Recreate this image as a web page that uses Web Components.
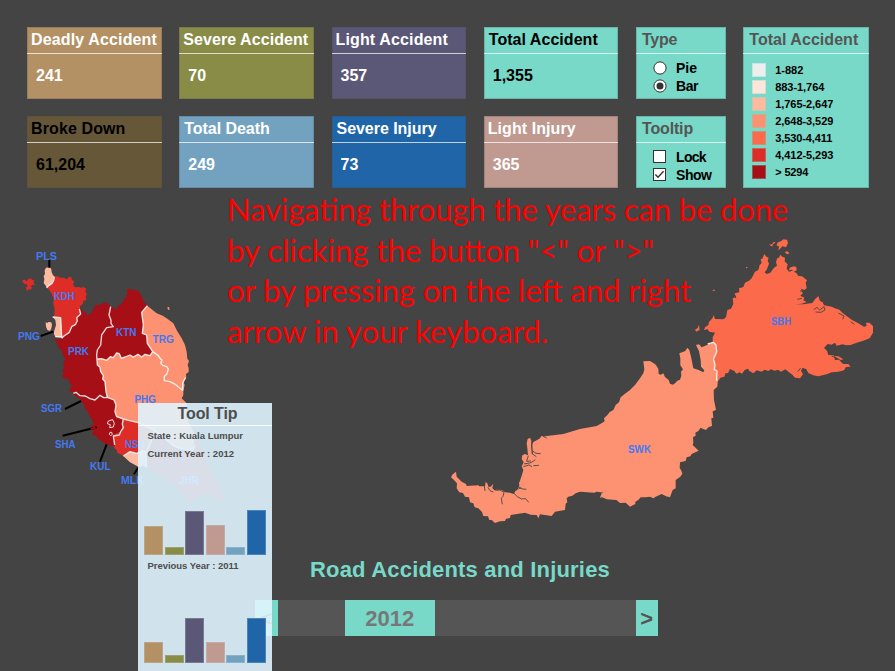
<!DOCTYPE html>
<html lang="en">
<head>
<meta charset="utf-8">
<title>Road Accidents and Injuries</title>
<style>
html,body{margin:0;width:895px;height:671px;overflow:hidden;background:#444}
body{font-family:"Liberation Sans",Arial,sans-serif;font-weight:bold}
</style>
</head>
<body>
<accident-dashboard></accident-dashboard>
<script>
const define = (name, html, setup) => customElements.define(name, class extends HTMLElement {
  connectedCallback() {
    if (this.shadowRoot) return;
    const t = document.createElement('template');
    t.innerHTML = typeof html === 'function' ? html(this) : html;
    this.attachShadow({mode: 'open'}).append(t.content.cloneNode(true));
    if (setup) setup(this);
  }
});

/* Text spaced so that it fills the width given by its "w" attribute. */
define('fit-text', `<style>:host{display:inline-block;white-space:nowrap}</style><span><slot></slot></span>`, el => {
  const w = parseFloat(el.getAttribute('w'));
  const natural = el.shadowRoot.querySelector('span').getBoundingClientRect().width;
  if (w && natural) el.style.letterSpacing = (w - natural) / el.textContent.length + 'px';
});

/* Titled coloured panel. */
define('info-panel', el => `<style>
  :host{display:flex;flex-direction:column;box-sizing:border-box;background:var(--bg);color:var(--fg,#fff);box-shadow:inset 0 0 0 1px rgba(70,70,70,.25)}
  header{box-sizing:border-box;height:27px;padding:4px 0 0 var(--pad,4px);font-size:16px;line-height:18px;border-bottom:1.5px solid rgba(255,255,255,.72);color:var(--title,inherit)}
  ::slotted(.value){padding:13px 0 0 9px;font-size:16px;line-height:18px}
</style><header><fit-text w="${el.getAttribute('w')}">${el.getAttribute('heading')}</fit-text></header><slot></slot>`);

define('choice-item', el => {
  const on = el.hasAttribute('checked');
  const icon = el.getAttribute('kind') === 'radio'
    ? `<circle cx="7" cy="7" r="6.1" fill="#fff" stroke="#333"/>${on ? '<circle cx="7" cy="7" r="3.5" fill="#333"/>' : ''}`
    : `<rect x=".5" y=".5" width="12" height="12" fill="#fff" stroke="#333"/>${on ? '<path d="M2.4 6.5 5 9.3 10.6 3.3" fill="none" stroke="#333" stroke-width="1.4"/>' : ''}`;
  return `<style>
  :host{display:flex;align-items:center;height:18px;padding-left:17px;color:#000;font-size:14px;line-height:18px}
  svg{width:14px;height:14px;margin-right:9px;flex:none}</style>
  <svg viewBox="0 0 14 14">${icon}</svg><fit-text w="${el.getAttribute('w')}">${el.textContent}</fit-text>`;
});

define('map-legend', `<style>
  :host{display:flex;flex-direction:column;gap:3px;padding:9px 0 0 9px;color:#000;font-size:11px;line-height:14px}
  div{display:flex;height:14px}i{width:14px;margin-right:9px;box-shadow:inset 0 0 0 1px rgba(120,217,200,.35)}
</style>` + [['#eee','1-882',28],['#fee5d9','883-1,764',49],['#fcbba1','1,765-2,647',58],['#fc9272','2,648-3,529',58],['#fb6a4a','3,530-4,411',57],['#de2d26','4,412-5,293',58],['#a50f15','&gt; 5294',33]]
  .map(([c,t,w]) => `<div><i style="background:${c}"></i><fit-text w="${w}">${t}</fit-text></div>`).join(''));

/* Choropleth map; both coasts are drawn on a grid three times finer than the page. */
const label = (t,x,y,w) => `<text x="${x}" y="${y}" textLength="${w}" lengthAdjust="spacingAndGlyphs">${t}</text>`;
define('state-map', `<style>
  :host{display:block;height:360px}svg{display:block}
  .lbl{font:bold 11px "Liberation Sans",Arial,sans-serif;fill:#4479f2}
  .edge{fill:none;stroke:#fff;stroke-opacity:.85;stroke-width:4;stroke-linejoin:round}
  .cut{fill:none;stroke:#444;stroke-width:2.6;stroke-linejoin:round}
  .lead{stroke:#000;stroke-width:6}
  .note{font:400 30px Lato,sans-serif;fill:#f00}
</style>
<svg width="895" height="360" viewBox="0 188 895 360">
<g transform="translate(10 235) scale(.33333)">
  <path fill="#fcbba1" d="M108 98 120 97 124 103 125 112 129 120 133 125 131 136 126 145 116 152 110 158 106 150 101 145 103 132 101 124 105 117 104 106ZM107 262 112 264 115 261 124 262 126 270 124 280 120 288 112 285 108 275Z"/>
  <path fill="#de2d26" d="M38 135 44 134 50 139 55 132 63 130 67 136 72 134 71 143 76 150 68 149 62 153 66 157 63 164 57 162 54 167 50 164 47 158 53 154 50 146 44 147 38 142ZM133 125 142 123 150 128 160 128 172 133 175 126 184 127 186 134 193 140 189 148 194 157 208 156 216 160 218 155 228 160 226 170 231 178 227 184 229 194 220 198 219 207 210 213 210 220 212 237 200 248 202 257 197 268 185 275 178 292 162 303 155 312 152 248 132 246 134 222 130 206 131 190 124 175 118 165 110 158 126 145Z"/>
  <path fill="#fcbba1" d="M128 246 152 248 155 306 136 305 132 298 132 290 138 270 136 255Z"/>
  <path fill="#a50f15" d="M212 220 218 224 220 232 227 232 231 241 240 238 247 231 248 222 255 216 257 209 270 210 280 204 290 202 302 215 299 222 297 240 303 256 303 266 310 275 290 278 282 290 275 300 274 316 272 330 262 345 260 360 262 390 270 397 272 410 280 422 278 432 285 440 288 470 292 487 270 482 262 496 250 495 240 488 230 489 218 480 205 480 198 472 186 472 176 468 182 458 186 450 178 444 178 435 166 430 161 428 156 424 157 418 162 415 157 405 162 400 160 385 165 376 163 366 157 360 158 350 146 338 140 322 132 312 155 312 162 303 178 292 185 275 197 268 202 257 200 248 212 237Z"/>
  <path fill="#a50f15" d="M302 215 310 216 313 222 320 221 326 212 333 207 340 199 345 188 350 184 352 173 350 166 356 160 363 166 372 162 380 168 388 170 395 185 402 200 412 212 395 232 400 270 397 295 410 300 412 325 428 350 420 362 405 358 395 366 384 358 370 366 360 360 345 366 334 370 328 356 320 354 310 368 301 365 290 376 275 371 262 372 260 360 262 345 272 330 274 316 275 300 290 278 310 275 303 266 303 256 297 240Z"/>
  <path fill="#fc9272" d="M412 212 425 223 440 235 458 242 470 250 490 265 501 287 515 310 525 330 530 350 532 371 537 378 533 390 536 399 536 411 528 417 529 429 520 440 524 450 520 467 520 480 515 490 530 505 530 530 535 560 555 600 560 625 555 645 530 640 510 640 490 632 470 615 450 602 432 585 408 575 385 563 360 554 340 552 320 545 315 530 318 510 312 495 292 487 288 470 285 440 278 432 280 422 272 410 270 397 262 390 262 372 275 371 290 376 301 365 310 368 320 354 328 356 334 370 345 366 360 360 370 366 384 358 395 366 405 358 420 362 428 350 412 325 410 300 397 295 400 270 395 232ZM472 217 477 216 479 224 474 224Z"/>
  <path fill="#a50f15" d="M186 472 205 480 230 489 250 495 262 496 270 482 292 487 312 495 318 510 315 530 320 545 340 552 335 590 318 600 310 610 314 630 305 635 298 630 287 628 278 620 264 612 258 601 250 602 248 595 252 588 245 584 242 575 250 570 248 557 240 545 233 530 225 521 222 508 213 500 208 490 198 486Z"/>
  <path fill="#de2d26" d="M340 552 385 563 432 585 425 615 410 650 380 652 360 650 340 663 329 656 322 655 321 646 312 638 314 630 310 600 335 588Z"/>
  <path fill="#fcbba1" d="M340 663 360 650 380 655 396 648 410 650 413 700 400 692 385 695 360 682Z"/>
  <path fill="#a50f15" d="M432 585 470 615 490 632 510 640 548 645 555 600 575 640 590 660 593 690 620 740 642 790 635 800 600 780 575 778 560 785 535 805 525 780 480 740 440 715 413 700 410 650 425 615Z"/>
  <g class="edge">
    <path d="M133 125 131 136 126 145 116 152 110 158M128 246 152 248 155 306 136 305M155 310 162 303 178 292 185 275 197 268 202 257 200 248 212 237 208 222M302 215 297 240 303 256 303 266 310 275 290 278 275 300 272 330 262 345 260 360 262 390 270 397 272 410 280 422 278 432 285 440 288 470 292 487"/>
    <path d="M412 212 395 232 400 270 397 295 410 300 412 325 428 350 420 362 405 358 395 366 384 358 370 366 360 360 345 366 334 370 328 356 320 354 310 368 301 365 290 376 275 371 262 372M428 350 445 362 450 370 456 376 452 384 458 391 470 395 475 402 470 418 463 424 463 437 480 440 497 449 518 466 518 445 526 428"/>
    <path d="M190 475 198 472 210 482 226 483 240 491 255 495 270 481 281 488 292 487 312 495 318 510 315 530 320 545 340 552 385 563 432 585 470 615 490 632 510 640 548 645 555 630M340 552 337 567 340 578 332 590 328 600 310 603 314 630M432 585 425 615 410 650 396 648 380 655 360 650 340 663"/>
    <path d="M295 558 308 554 313 565 310 576 299 578 301 569 292 566ZM300 592h5l2 6-5 4-4-4Z" stroke-width="3"/>
  </g>
  <path class="lead" d="M118 74V98M92 303 130 290M165 522 213 498M158 602 260 577M270 680 290 628M372 718 384 698"/>
  <path d="M242 582 254 578 256 590 248 598" fill="none" stroke="#a50f15" stroke-width="5"/>
</g>
<g transform="translate(440 330) scale(.33333)">
  <path fill="#fc9272" d="M48 425 50 440 65 455 78 462 80 468 115 466 118 469 135 469 137 456 142 460 145 470 152 470 160 461 157 474 163 481 170 479 185 480 195 487 209 488 222 492 226 483 232 480 238 468 237 460 241 449 246 434 250 420 245 409 251 397 245 386 247 376 255 372 264 376 262 355 260 340 263 327 270 323 274 333 273 347 275 370 279 373 277 345 280 336 290 331 300 325 304 318 315 319 370 312 420 297 470 288 486 279 494 274 492 265 503 254 509 246 520 240 527 225 537 217 542 202 553 193 570 180 585 165 600 145 610 130 613 118 610 94 630 93 640 99 648 105 655 117 656 132 663 134 670 130 675 141 686 150 690 161 699 164 706 159 712 152 720 149 724 137 723 125 729 118 721 106 721 85 718 70 736 63 742 53 748 60 753 80 760 115 776 120 790 127 793 121 783 110 782 90 777 63 768 45 777 43 785 52 803 44 820 37 828 40 831 62 822 85 824 100 830 120 834 150 832 170 821 180 822 210 828 240 818 244 820 263 814 265 816 288 805 292 798 300 788 296 782 293 775 303 766 308 767 317 759 322 760 339 758 345 776 362 755 372 751 379 740 382 737 393 720 397 719 413 724 422 727 431 721 440 707 450 707 475 698 480 690 502 678 499 665 492 647 500 640 505 630 500 617 502 602 502 595 510 586 515 586 522 570 530 557 518 540 519 529 510 500 508 487 502 480 503 485 490 492 488 470 485 463 488 420 485 407 490 397 497 385 500 380 505 382 517 377 521 375 540 345 545 335 558 300 553 295 565 290 555 272 554 255 548 212 555 210 564 198 566 195 573 180 574 165 579 155 570 148 570 144 559 130 558 126 546 115 535 104 532 100 520 90 517 87 502 75 500 69 489 58 487 50 475 51 460 42 450 33 442 37 434Z"/>
  <path class="cut" d="M222 490 232 500 245 507 257 506 266 517M235 470 243 476 259 478M166 481 180 480 192 487 189 499 184 505 187 523M144 472 150 482 160 486M275 370 289 380M278 363 288 370 302 371M250 410 267 405 276 410M252 402 273 398 286 389M265 377 260 394 273 393M280 407 297 406M133 468 135 483M308 318 320 324M235 477 244 472"/>
</g>
<g transform="translate(680 230) scale(.33333)">
  <path fill="#fb6a4a" d="M98 336 98 322 105 308 88 305 83 298 72 300 75 292 85 285 87 276 97 265 101 256 105 267 130 268 138 262 142 240 153 236 160 222 158 205 168 201 164 190 178 187 177 175 190 171 195 158 207 152 215 145 225 125 235 120 239 105 245 99 242 88 247 86 253 72 259 80 266 83 263 92 267 101 260 119 254 127 260 132 271 128 282 113 291 107 288 96 292 84 297 83 301 74 307 80 315 83 314 94 323 103 320 116 327 125 337 122 350 130 355 138 366 139 381 151 377 158 380 174 374 180 362 176 369 189 361 197 373 203 370 211 380 216 365 221 345 223 370 223 397 219 405 208 415 198 420 213 428 217 432 226 455 230 465 235 478 239 489 250 499 257 515 269 535 280 552 290 560 288 558 278 568 278 579 288 579 308 569 325 550 332 530 338 512 345 498 346 488 343 470 347 465 338 455 344 443 342 432 354 441 362 445 375 461 376 465 390 477 389 489 402 505 402 512 410 498 411 492 421 475 425 455 427 440 433 415 439 400 436 385 429 379 418 368 413 363 422 369 433 360 445 345 443 337 434 325 425 316 418 303 425 294 419 284 422 273 418 265 423 254 419 245 425 230 421 220 430 208 423 204 416 194 420 186 431 178 427 169 431 163 423 150 417 144 430 137 429 133 440 121 443 115 453 110 430 103 415 103 390 110 365 108 345ZM292 38 305 32 310 28 321 29 324 39 318 52 307 49 295 62 297 49 290 47ZM267 44 276 43 281 36 287 37 278 44 277 50ZM314 66 322 64 329 70 321 73ZM329 113 341 109 349 111 350 121 341 125 336 119 327 121ZM45 299 53 294 57 284 59 300 49 305ZM460 377 475 379 490 388 482 390ZM198 111h4v4h-4zM98 179h7v3h-7z"/>
  <path class="cut" d="M401 239 411 232 419 240 432 230 435 240 423 247 407 246M475 249 492 258 488 268M455 378 475 387M366 205 352 208M384 194 360 182M512 275 523 283M160 190 168 205M362 414 353 425"/>
  <path class="edge" d="M83 342 100 337 108 345 110 365 101 388 105 405 103 418 111 423 110 452"/>
</g>
<g class="lbl">${[['PLS',36,260,21],['KDH',54,300,20.5],['PNG',18,340,22],['PRK',68,355,21],['KTN',116,336,20.5],['TRG',152.5,343,21.5],['PHG',134.5,403,21.5],['SGR',41,412,21],['SHA',55,448,20.5],['KUL',90,470,20.5],['NSN',125,448,20.5],['MLK',121,484,23],['JHR',179,484,20],['SWK',628,453,23],['SBH',771,325,20]].map(a=>label(...a)).join('')}</g>
<g class="note">${[['Navigating through the years can be done',227,221,561],['by clicking the button "&lt;" or "&gt;"',227,262,427],['or by pressing on the left and right',227,302,464],['arrow in your keyboard.',227,343,321]].map(a=>label(...a)).join('')}</g>
</svg>`);

define('year-slider', `<style>
  :host{display:flex;width:403px;height:36px;background:#555;color:#555;font-size:22px;line-height:38px;text-align:center}
  .b{width:22.5px;background:#78d9c8}.year{width:89.5px;margin-left:67.5px;margin-right:auto;background:#78d9c8;color:#777}
</style><div class="b">&lt;</div><div class="year"><fit-text w="49">2012</fit-text></div><div class="b">&gt;</div>`);

const palette = ['#b39164','#898c47','#5b5776','#c09990','#73a2c1','#1f65a8'];
define('bar-chart', el => `<style>
  :host{display:flex;align-items:flex-end;gap:1.5px;padding-left:6px}
  i{width:19px;box-shadow:inset 0 0 0 1px rgba(209,227,237,.25)}
</style>` + el.getAttribute('values').split(',').map((v,i) => `<i style="height:${v}px;background:${palette[i]}"></i>`).join(''));

define('tool-tip', `<style>
  :host{display:block;box-sizing:border-box;background:rgba(224,245,255,.9);color:#4d4d4d;font-size:9.5px;line-height:12px;overflow:hidden}
  header{box-sizing:border-box;height:23px;padding:1px 0 0 5px;text-align:center;font-size:16px;line-height:19px;border-bottom:1.5px solid rgba(255,255,255,.85)}
  p{margin:0;padding-left:9.5px;height:12px}
  .s{padding-top:4px}.c{padding-top:6px}.p{padding-top:5px}
</style><header><fit-text w="60">Tool Tip</fit-text></header>
<p class="s"><fit-text w="95.5">State : Kuala Lumpur</fit-text></p>
<p class="c"><fit-text w="86.5">Current Year : 2012</fit-text></p>
<bar-chart style="height:95px" values="29.5,8.5,44,30.5,8.5,45"></bar-chart>
<p class="p"><fit-text w="91">Previous Year : 2011</fit-text></p>
<bar-chart style="height:91px" values="21,8,45,21.5,8,45"></bar-chart>`);

define('accident-dashboard', `<style>
  :host{display:block;position:relative;width:895px;height:671px;overflow:hidden;background:#444}
  .top{display:grid;grid-template-columns:repeat(4,134.5px) 89.5px 126px;column-gap:17.75px;row-gap:17.5px;grid-template-rows:71.5px 72px;padding:27px 0 0 27px}
  .legend{grid-column:6;grid-row:1/3}
  .teal{--bg:#78d9c8;--title:#555;--pad:6px}
  .choices{padding-top:5px}
  h1{margin:0;padding:9px 0 0 310px;height:43px;font-size:22px;line-height:26px;color:#78d9c8}
  year-slider{margin-left:255px}
  tool-tip{position:absolute;left:138px;top:403px;width:134px;height:268px}
</style>
<div class="top">
  <info-panel heading="Deadly Accident" w="126" style="--bg:#b39164"><div class="value">241</div></info-panel>
  <info-panel heading="Severe Accident" w="125" style="--bg:#898c47"><div class="value">70</div></info-panel>
  <info-panel heading="Light Accident" w="112.5" style="--bg:#5b5776"><div class="value">357</div></info-panel>
  <info-panel heading="Total Accident" w="109" style="--bg:#78d9c8;--fg:#000;--pad:5px"><div class="value">1,355</div></info-panel>
  <info-panel class="teal" heading="Type" w="35"><div class="choices"><choice-item kind="radio" w="21">Pie</choice-item><choice-item kind="radio" checked w="22">Bar</choice-item></div></info-panel>
  <info-panel class="teal legend" heading="Total Accident" w="109"><map-legend></map-legend></info-panel>
  <info-panel heading="Broke Down" w="94.5" style="--bg:#665739;--fg:#000"><div class="value">61,204</div></info-panel>
  <info-panel heading="Total Death" w="85.5" style="--bg:#73a2c1;--pad:5px"><div class="value">249</div></info-panel>
  <info-panel heading="Severe Injury" w="100" style="--bg:#1f65a8;--pad:5px"><div class="value">73</div></info-panel>
  <info-panel heading="Light Injury" w="88" style="--bg:#c09990"><div class="value">365</div></info-panel>
  <info-panel class="teal" heading="Tooltip" w="51"><div class="choices"><choice-item w="30">Lock</choice-item><choice-item checked w="35.5">Show</choice-item></div></info-panel>
</div>
<state-map></state-map>
<h1><fit-text w="300">Road Accidents and Injuries</fit-text></h1>
<year-slider></year-slider>
<tool-tip></tool-tip>`);
</script>
</body>
</html>
